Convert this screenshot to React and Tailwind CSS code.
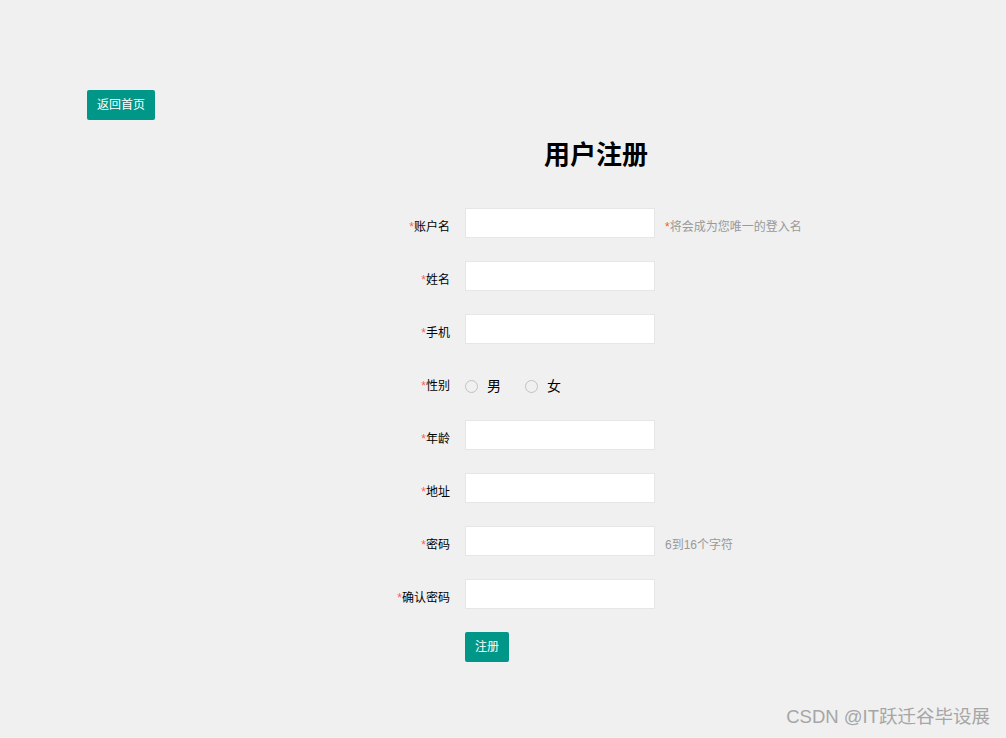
const font = { fontFamily: '"Liberation Sans", "Noto Sans CJK SC", sans-serif' };

const fields = [
  { label: "账户名", hint: "将会成为您唯一的登入名", hintStar: true },
  { label: "姓名" },
  { label: "手机" },
  { label: "性别", radio: true },
  { label: "年龄" },
  { label: "地址" },
  { label: "密码", hint: "6到16个字符" },
  { label: "确认密码" },
];

function Row({ field }) {
  return (
    <div className="flex items-center h-[30px]">
      <label className="w-[115px] pr-[15px] pt-[8px] text-right text-[12px] text-black leading-none">
        <span className="text-[#ff5a5f]">*</span>
        {field.label}
      </label>
      {field.radio ? (
        <div className="flex items-center pt-[8px] text-[14px] text-black">
          <span className="flex items-center">
            <span className="w-[13px] h-[13px] rounded-full border border-[#c2c2c2]"></span>
            <span className="ml-[9px]">男</span>
          </span>
          <span className="flex items-center ml-[24px]">
            <span className="w-[13px] h-[13px] rounded-full border border-[#c2c2c2]"></span>
            <span className="ml-[9px]">女</span>
          </span>
        </div>
      ) : (
        <input className="w-[190px] h-[30px] bg-white border border-[#e6e6e6] outline-none px-2 text-[12px]" />
      )}
      {field.hint && (
        <span className="ml-[10px] pt-[8px] text-[12px] text-[#999] leading-none">
          {field.hintStar && <span className="text-[#ff5722]">*</span>}
          {field.hint}
        </span>
      )}
    </div>
  );
}

export default function App() {
  return (
    <div className="min-h-[738px] bg-[#f0f0f0] relative" style={font}>
      <div className="pt-[90px] pl-[87px]">
        <button className="h-[30px] w-[68px] bg-[#009688] text-white text-[12px] rounded-[2px]">返回首页</button>
      </div>
      <div className="pl-[350px]">
        <h1 className="w-[492px] text-center text-[26px] font-bold text-black mt-[17px] leading-[36px]">用户注册</h1>
        <div className="mt-[35px] flex flex-col gap-[23px]">
          {fields.map((f) => (
            <Row key={f.label} field={f} />
          ))}
          <div className="pl-[115px]">
            <button className="h-[30px] w-[44px] bg-[#009688] text-white text-[12px] rounded-[2px]">注册</button>
          </div>
        </div>
      </div>
      <div className="absolute right-[16px] bottom-[7px] text-[18.5px] text-[#a6a6a6]">CSDN @IT跃迁谷毕设展</div>
    </div>
  );
}
